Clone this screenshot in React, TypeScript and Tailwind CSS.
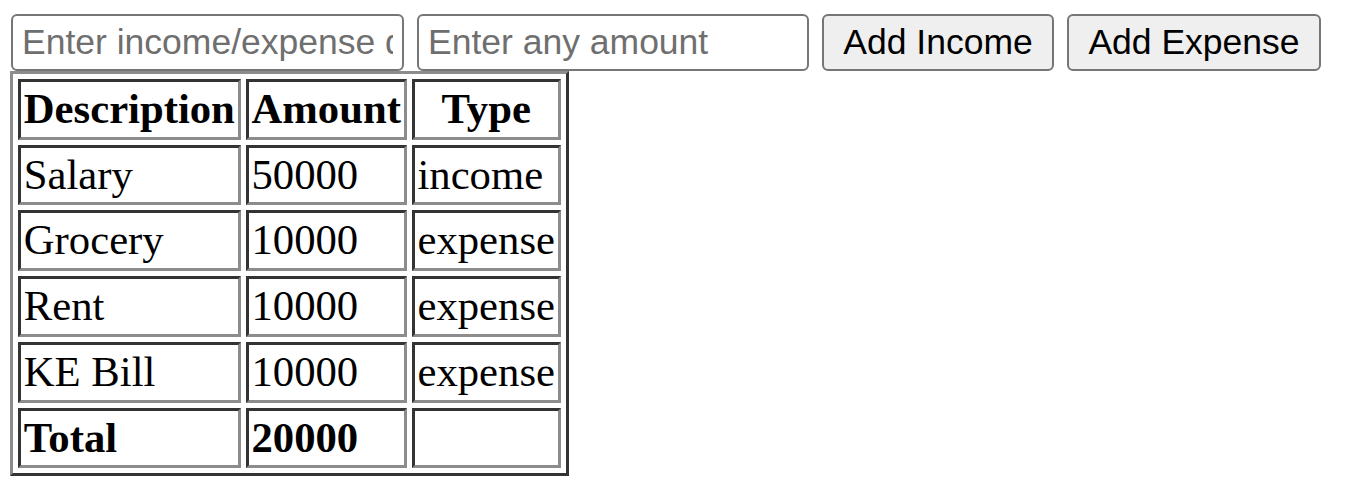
import React from "react";

interface Entry {
  description: string;
  amount: number;
  type: "income" | "expense";
}

const entries: Entry[] = [
  { description: "Salary", amount: 50000, type: "income" },
  { description: "Grocery", amount: 10000, type: "expense" },
  { description: "Rent", amount: 10000, type: "expense" },
  { description: "KE Bill", amount: 10000, type: "expense" },
];

const cell =
  "border-[3px] border-t-[#333333] border-l-[#333333] border-b-[#8c8c8c] border-r-[#8c8c8c] px-[2.8px] py-[3px] leading-[48.7px] align-middle";

const App: React.FC = () => {
  const total = entries.reduce(
    (sum, e) => (e.type === "income" ? sum + e.amount : sum - e.amount),
    0
  );

  return (
    <div className="bg-white min-h-[499px] w-[1349px]">
      <div className="flex items-start gap-[13px] pl-[11px] pt-[14px] font-['Liberation_Sans',Arial,sans-serif] text-[35.5px]">
        <input
          type="text"
          placeholder="Enter income/expense description"
          className="w-[393px] h-[57px] border-[2.5px] border-[#767676] rounded-[6px] px-[9px] placeholder:text-[#6f6f6f] outline-none"
        />
        <input
          type="number"
          placeholder="Enter any amount"
          className="w-[392px] h-[57px] border-[2.5px] border-[#767676] rounded-[6px] px-[9px] placeholder:text-[#6f6f6f] outline-none"
        />
        <button className="w-[232px] h-[57px] bg-[#efefef] border-[2.5px] border-[#767676] rounded-[6px] text-black">
          Add Income
        </button>
        <button className="w-[254px] h-[57px] bg-[#efefef] border-[2.5px] border-[#767676] rounded-[6px] text-black">
          Add Expense
        </button>
      </div>

      <table className="ml-[10px] border-separate border-spacing-[5px] border-[3px] border-t-[#8c8c8c] border-l-[#8c8c8c] border-b-[#333333] border-r-[#333333] font-['Liberation_Serif','Times_New_Roman',serif] text-[42.7px] text-black">
        <thead>
          <tr>
            <th className={`${cell} text-center font-bold`}>Description</th>
            <th className={`${cell} text-center font-bold`}>Amount</th>
            <th className={`${cell} text-center font-bold`}>Type</th>
          </tr>
        </thead>
        <tbody>
          {entries.map((e) => (
            <tr key={e.description}>
              <td className={cell}>{e.description}</td>
              <td className={cell}>{e.amount}</td>
              <td className={cell}>{e.type}</td>
            </tr>
          ))}
          <tr>
            <td className={`${cell} font-bold`}>Total</td>
            <td className={`${cell} font-bold`}>{total}</td>
            <td className={cell}></td>
          </tr>
        </tbody>
      </table>
    </div>
  );
};

export default App;
